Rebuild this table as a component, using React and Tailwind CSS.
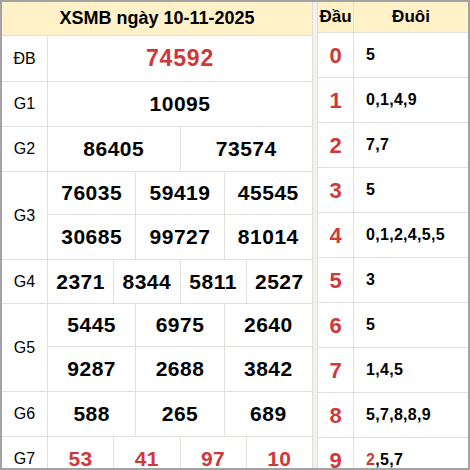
const prizes = [
  { label: "ĐB", rows: [["74592"]], h: ["h-[45px]"], special: true },
  { label: "G1", rows: [["10095"]], h: ["h-[44px]"] },
  { label: "G2", rows: [["86405", "73574"]], h: ["h-[44px]"] },
  { label: "G3", rows: [["76035", "59419", "45545"], ["30685", "99727", "81014"]], h: ["h-[43px]", "h-[44px]"] },
  { label: "G4", rows: [["2371", "8344", "5811", "2527"]], h: ["h-[43px]"] },
  { label: "G5", rows: [["5445", "6975", "2640"], ["9287", "2688", "3842"]], h: ["h-[43px]", "h-[44px]"] },
  { label: "G6", rows: [["588", "265", "689"]], h: ["h-[44px]"] },
  { label: "G7", rows: [["53", "41", "97", "10"]], h: ["h-[44px]"], red: true },
];

const loto = [
  ["0", "5"],
  ["1", "0,1,4,9"],
  ["2", "7,7"],
  ["3", "5"],
  ["4", "0,1,2,4,5,5"],
  ["5", "3"],
  ["6", "5"],
  ["7", "1,4,5"],
  ["8", "5,7,8,8,9"],
  ["9", "2,5,7"],
];

export default function App() {
  return (
    <div className="w-[470px] h-[470px] overflow-hidden bg-white border-2 border-[#a3a3a3] flex font-['Liberation_Sans',Arial,sans-serif] text-black">
      {/* Bảng kết quả */}
      <div className="w-[311px] shrink-0 border-r border-[#e2dfda]">
        <div className="h-[34px] bg-[#fff1c8] border-b border-[#e2dfda] flex items-center justify-center text-[18px] font-bold">
          XSMB ngày 10-11-2025
        </div>
        {prizes.map((p) => (
          <div key={p.label} className="flex border-b border-[#e2dfda]">
            <div className="w-[46px] shrink-0 border-r border-[#e2dfda] flex items-center justify-center text-[16px]">
              {p.label}
            </div>
            <div className="flex-1 flex flex-col">
              {p.rows.map((row, ri) => (
                <div
                  key={ri}
                  className={`flex ${p.h[ri]} ${ri < p.rows.length - 1 ? "border-b border-[#e2dfda]" : ""}`}
                >
                  {row.map((n, ci) => (
                    <div
                      key={ci}
                      className={`flex-1 flex items-center justify-center font-bold ${
                        ci < row.length - 1 ? "border-r border-[#e2dfda]" : ""
                      } ${
                        p.special
                          ? "text-[23px] tracking-[0.8px] text-[#d0373a]"
                          : p.red
                          ? "text-[21px] tracking-[0.5px] text-[#d0373a]"
                          : "text-[21px] tracking-[0.5px]"
                      }`}
                    >
                      {n}
                    </div>
                  ))}
                </div>
              ))}
            </div>
          </div>
        ))}
      </div>

      <div className="w-[5px] shrink-0 bg-[#f3f1ee] border-r border-[#e2dfda]"></div>

      {/* Bảng loto đầu đuôi */}
      <div className="flex-1">
        <div className="h-[31px] bg-[#fff1c8] border-b border-[#e2dfda] flex text-[17px] font-bold">
          <div className="w-[36px] border-r border-[#e2dfda] flex items-center justify-center">Đầu</div>
          <div className="flex-1 flex items-center justify-center">Đuôi</div>
        </div>
        {loto.map(([d, tail]) => (
          <div key={d} className="h-[45px] flex border-b border-[#e2dfda]">
            <div className="w-[36px] shrink-0 border-r border-[#e2dfda] flex items-center justify-center text-[22px] font-bold text-[#d0373a]">
              {d}
            </div>
            <div className="flex-1 flex items-center pl-[12px] text-[16px] font-bold tracking-[0.3px]">
              {d === "9" ? (
                <>
                  <span className="text-[#d0373a]">2</span>
                  {tail.slice(1)}
                </>
              ) : (
                tail
              )}
            </div>
          </div>
        ))}
      </div>
    </div>
  );
}
